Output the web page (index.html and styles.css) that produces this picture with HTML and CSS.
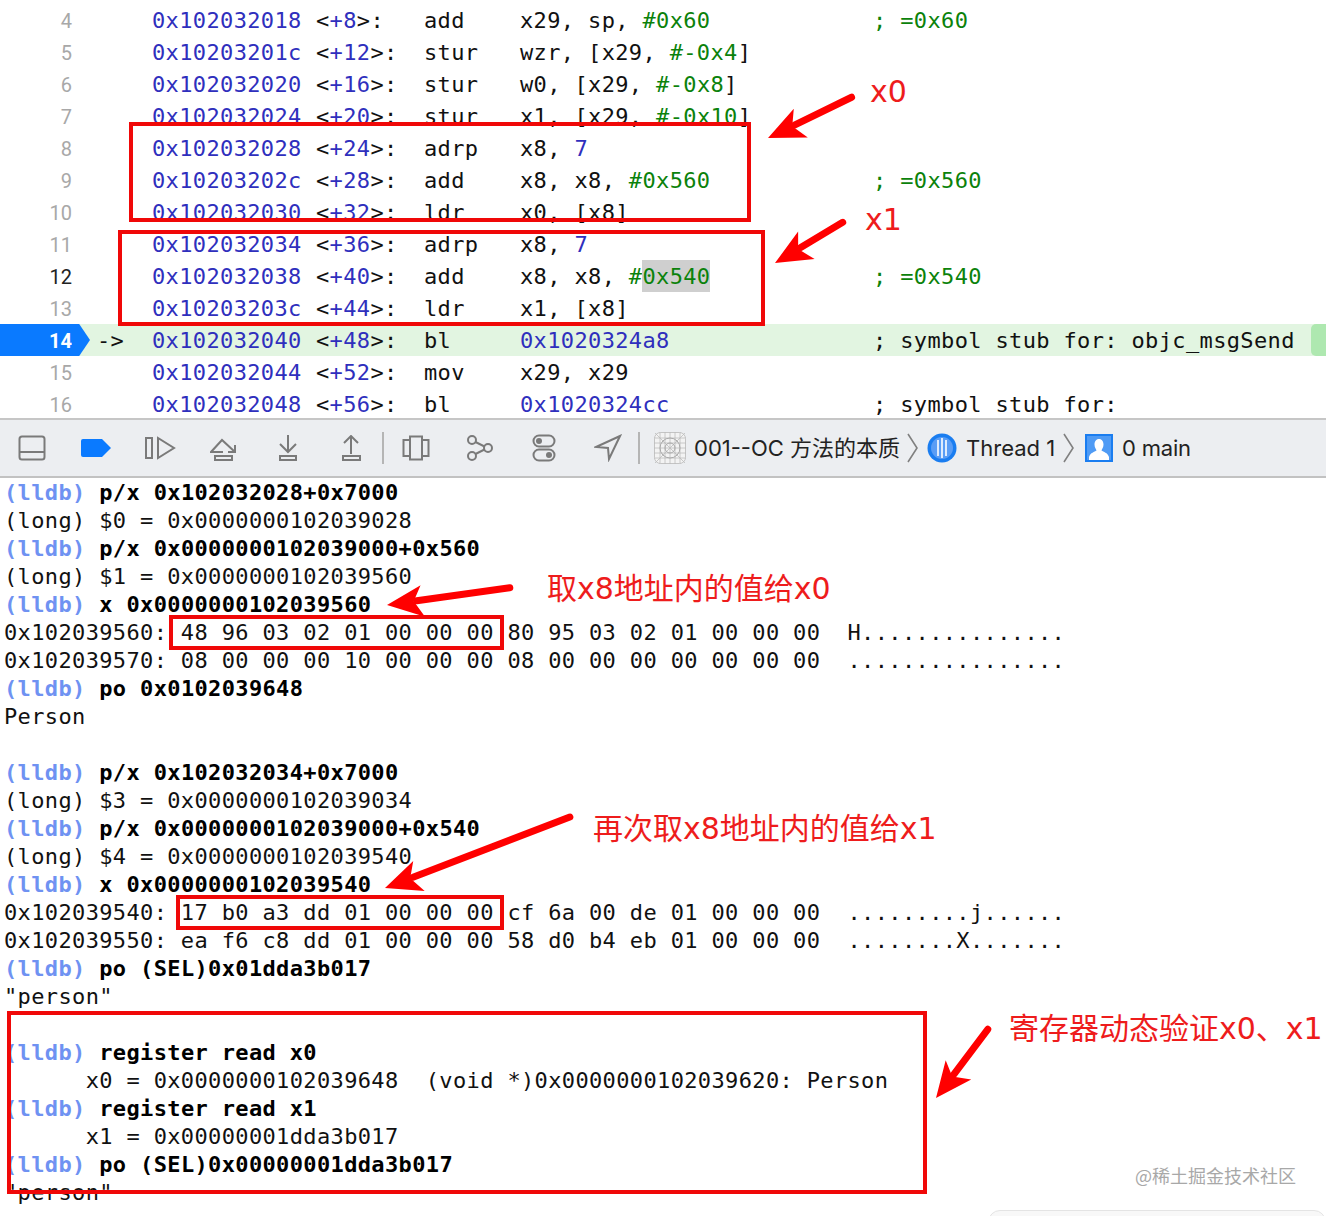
FILE: index.html
```html
<!DOCTYPE html>
<html lang="zh">
<head>
<meta charset="utf-8">
<title>LLDB objc_msgSend</title>
<link rel="stylesheet" href="styles.css">
</head>
<body>
<div class="page">
  <section class="disasm">
    <div class="row"><span class="ln">4</span><span class="mk"></span><span class="addr">0x102032018</span><span class="off">&lt;<b>+8</b>&gt;:</span><span class="op">add</span><span class="args">x29, sp, <i>#0x60</i></span><span class="cmt">; =0x60</span></div>
    <div class="row"><span class="ln">5</span><span class="mk"></span><span class="addr">0x10203201c</span><span class="off">&lt;<b>+12</b>&gt;:</span><span class="op">stur</span><span class="args">wzr, [x29, <i>#-0x4</i>]</span></div>
    <div class="row"><span class="ln">6</span><span class="mk"></span><span class="addr">0x102032020</span><span class="off">&lt;<b>+16</b>&gt;:</span><span class="op">stur</span><span class="args">w0, [x29, <i>#-0x8</i>]</span></div>
    <div class="row"><span class="ln">7</span><span class="mk"></span><span class="addr">0x102032024</span><span class="off">&lt;<b>+20</b>&gt;:</span><span class="op">stur</span><span class="args">x1, [x29, <i>#-0x10</i>]</span></div>
    <div class="row"><span class="ln">8</span><span class="mk"></span><span class="addr">0x102032028</span><span class="off">&lt;<b>+24</b>&gt;:</span><span class="op">adrp</span><span class="args">x8, <b>7</b></span></div>
    <div class="row"><span class="ln">9</span><span class="mk"></span><span class="addr">0x10203202c</span><span class="off">&lt;<b>+28</b>&gt;:</span><span class="op">add</span><span class="args">x8, x8, <i>#0x560</i></span><span class="cmt">; =0x560</span></div>
    <div class="row"><span class="ln">10</span><span class="mk"></span><span class="addr">0x102032030</span><span class="off">&lt;<b>+32</b>&gt;:</span><span class="op">ldr</span><span class="args">x0, [x8]</span></div>
    <div class="row"><span class="ln">11</span><span class="mk"></span><span class="addr">0x102032034</span><span class="off">&lt;<b>+36</b>&gt;:</span><span class="op">adrp</span><span class="args">x8, <b>7</b></span></div>
    <div class="row"><span class="ln ln-cur">12</span><span class="mk"></span><span class="addr">0x102032038</span><span class="off">&lt;<b>+40</b>&gt;:</span><span class="op">add</span><span class="args">x8, x8, <i>#<span class="sel">0x540</span></i></span><span class="cmt">; =0x540</span></div>
    <div class="row"><span class="ln">13</span><span class="mk"></span><span class="addr">0x10203203c</span><span class="off">&lt;<b>+44</b>&gt;:</span><span class="op">ldr</span><span class="args">x1, [x8]</span></div>
    <div class="row row-pc"><span class="ln ln-pc">14</span><span class="mk">-&gt;</span><span class="addr">0x102032040</span><span class="off">&lt;<b>+48</b>&gt;:</span><span class="op">bl</span><span class="args"><b>0x1020324a8</b></span><span class="cmt cmt-k">; symbol stub for: objc_msgSend</span><span class="pc-end"></span></div>
    <div class="row"><span class="ln">15</span><span class="mk"></span><span class="addr">0x102032044</span><span class="off">&lt;<b>+52</b>&gt;:</span><span class="op">mov</span><span class="args">x29, x29</span></div>
    <div class="row"><span class="ln">16</span><span class="mk"></span><span class="addr">0x102032048</span><span class="off">&lt;<b>+56</b>&gt;:</span><span class="op">bl</span><span class="args"><b>0x1020324cc</b></span><span class="cmt cmt-k">; symbol stub for:</span></div>
  </section>

  <nav class="toolbar">
    <span class="slot"><svg width="28" height="26" viewBox="0 0 28 26"><rect x="1.500" y="1.500" width="25" height="23" rx="2.500" class="ic"/><path d="M1.500 17h25" class="ic"/></svg></span>
    <span class="slot"><svg width="32" height="20" viewBox="0 0 32 20"><path d="M3 1h19l9 9-9 9H3a2 2 0 0 1-2-2V3a2 2 0 0 1 2-2z" fill="#0a7aff"/></svg></span>
    <span class="slot"><svg width="32" height="24" viewBox="0 0 32 24"><rect x="2" y="2" width="6" height="20" class="ic"/><path d="M14 2v20l16-10z" class="ic"/></svg></span>
    <span class="slot"><svg width="28" height="26" viewBox="0 0 28 26"><path d="M13 17H1L12 5l13 12" class="ic"/><path d="M25 10v7h-7" class="ic"/><rect x="5" y="21" width="17" height="4" class="ic"/></svg></span>
    <span class="slot"><svg width="22" height="26" viewBox="0 0 22 26"><path d="M11 0v17M3 9l8 8 8-8" class="ic"/><rect x="3" y="21" width="16" height="4" class="ic"/></svg></span>
    <span class="slot"><svg width="22" height="26" viewBox="0 0 22 26"><path d="M10 19V1.500M3 8l7-7 7 7" class="ic"/><rect x="2" y="21" width="17" height="4" class="ic"/></svg></span>
    <span class="sep"></span>
    <span class="slot"><svg width="28" height="26" viewBox="0 0 28 26"><rect x="8" y="1.500" width="12" height="23" class="ic"/><path d="M8 5H1.500v16H8M20 5h6.500v16H20" class="ic"/></svg></span>
    <span class="slot"><svg width="28" height="26" viewBox="0 0 28 26"><circle cx="6" cy="5" r="4" class="ic"/><circle cx="6" cy="21" r="4" class="ic"/><circle cx="22" cy="13" r="4" class="ic"/><path d="M9.500 7l9 4.500M9.500 19l9-4.500" class="ic"/></svg></span>
    <span class="slot"><svg width="24" height="28" viewBox="0 0 24 28"><rect x="1.500" y="1.500" width="21" height="11" rx="5.500" class="ic"/><rect x="1.500" y="15.500" width="21" height="11" rx="5.500" class="ic"/><circle cx="7" cy="7" r="3" fill="#7a7a7a"/><circle cx="17" cy="21" r="3" fill="#7a7a7a"/></svg></span>
    <span class="slot"><svg width="28" height="28" viewBox="0 0 28 28"><path d="M26 2 2 13l12 1 1 11z" class="ic"/></svg></span>
    <span class="sep"></span>
    <span class="crumbs">
      <svg class="app" width="32" height="32" viewBox="0 0 32 32"><rect x=".5" y=".5" width="31" height="31" rx="6" fill="#f3f3f3" stroke="#c4c4c4"/><path d="M6 0v32M11 0v32M16 0v32M21 0v32M26 0v32M0 6h32M0 11h32M0 16h32M0 21h32M0 26h32M1 1l30 30M31 1 1 31" stroke="#bcbcbc" stroke-width=".8" fill="none"/><circle cx="16" cy="16" r="10" stroke="#aaa" fill="none"/><circle cx="16" cy="16" r="5" stroke="#aaa" fill="none"/></svg>
      <span class="crumb c1">001--OC 方法的本质</span>
      <svg class="chev" width="12" height="30" viewBox="0 0 12 30"><path d="M1 1l9 14-9 14" class="chv"/></svg>
      <svg class="thr" width="30" height="30" viewBox="0 0 30 30"><circle cx="15" cy="15" r="14.500" fill="#1a7df0"/><circle cx="15" cy="15" r="11" fill="#5a9df5"/><path d="M11 7v16M15 5v20M19 7v16" stroke="#fff" stroke-width="1.600"/></svg>
      <span class="crumb c2">Thread 1</span>
      <svg class="chev" width="12" height="30" viewBox="0 0 12 30"><path d="M1 1l9 14-9 14" class="chv"/></svg>
      <svg class="usr" width="28" height="28" viewBox="0 0 28 28"><rect x="0" y="0" width="28" height="28" fill="#1a7df0"/><rect x="2" y="2" width="24" height="24" fill="#4f9bf5"/><path d="M14 5c3 0 4.500 2.500 4.500 5.500S17 15 16.500 16.500c2 1.500 6 2 7.500 6.500v3H4v-3c1.500-4.500 5.500-5 7.500-6.500C11 15 9.500 13.500 9.500 10.500S11 5 14 5z" fill="#fff"/></svg>
      <span class="crumb c3">0 main</span>
    </span>
  </nav>

  <section class="console">
    <div class="ln-c"><span class="pr">(lldb)</span> <strong>p/x 0x102032028+0x7000</strong></div>
    <div class="ln-c">(long) $0 = 0x0000000102039028</div>
    <div class="ln-c"><span class="pr">(lldb)</span> <strong>p/x 0x0000000102039000+0x560</strong></div>
    <div class="ln-c">(long) $1 = 0x0000000102039560</div>
    <div class="ln-c"><span class="pr">(lldb)</span> <strong>x 0x0000000102039560</strong></div>
    <div class="ln-c">0x102039560: 48 96 03 02 01 00 00 00 80 95 03 02 01 00 00 00  H...............</div>
    <div class="ln-c">0x102039570: 08 00 00 00 10 00 00 00 08 00 00 00 00 00 00 00  ................</div>
    <div class="ln-c"><span class="pr">(lldb)</span> <strong>po 0x0102039648</strong></div>
    <div class="ln-c">Person</div>
    <div class="ln-c"></div>
    <div class="ln-c"><span class="pr">(lldb)</span> <strong>p/x 0x102032034+0x7000</strong></div>
    <div class="ln-c">(long) $3 = 0x0000000102039034</div>
    <div class="ln-c"><span class="pr">(lldb)</span> <strong>p/x 0x0000000102039000+0x540</strong></div>
    <div class="ln-c">(long) $4 = 0x0000000102039540</div>
    <div class="ln-c"><span class="pr">(lldb)</span> <strong>x 0x0000000102039540</strong></div>
    <div class="ln-c">0x102039540: 17 b0 a3 dd 01 00 00 00 cf 6a 00 de 01 00 00 00  .........j......</div>
    <div class="ln-c">0x102039550: ea f6 c8 dd 01 00 00 00 58 d0 b4 eb 01 00 00 00  ........X.......</div>
    <div class="ln-c"><span class="pr">(lldb)</span> <strong>po (SEL)0x01dda3b017</strong></div>
    <div class="ln-c">"person"</div>
    <div class="ln-c"></div>
    <div class="ln-c"><span class="pr">(lldb)</span> <strong>register read x0</strong></div>
    <div class="ln-c">      x0 = 0x0000000102039648  (void *)0x0000000102039620: Person</div>
    <div class="ln-c"><span class="pr">(lldb)</span> <strong>register read x1</strong></div>
    <div class="ln-c">      x1 = 0x00000001dda3b017</div>
    <div class="ln-c"><span class="pr">(lldb)</span> <strong>po (SEL)0x00000001dda3b017</strong></div>
    <div class="ln-c">"person"</div>
  </section>

  <div class="box b1"></div>
  <div class="box b2"></div>
  <div class="box b3"></div>
  <div class="box b4"></div>
  <div class="box b5"></div>

  <svg class="arrows" width="1326" height="1216" viewBox="0 0 1326 1216">
    <defs>
      <path id="head" d="M0 0-36-17-27 0-36 15z" fill="#f00"/>
    </defs>
    <g transform="translate(768 138) rotate(154)"><path d="M-30 0H-93" class="shaft"/><use href="#head"/></g>
    <g transform="translate(775 263) rotate(149)"><path d="M-30 0H-79" class="shaft"/><use href="#head"/></g>
    <g transform="translate(387 605) rotate(172)"><path d="M-30 0H-124" class="shaft"/><use href="#head"/></g>
    <g transform="translate(385 888) rotate(159)"><path d="M-30 0H-198" class="shaft"/><use href="#head"/></g>
    <g transform="translate(936 1098) rotate(127)"><path d="M-30 0H-86" class="shaft"/><use href="#head"/></g>
  </svg>

  <div class="note n-x0">x0</div>
  <div class="note n-x1">x1</div>
  <div class="note n-a">取x8地址内的值给x0</div>
  <div class="note n-b">再次取x8地址内的值给x1</div>
  <div class="note n-c">寄存器动态验证x0、x1</div>
  <div class="mark">@稀土掘金技术社区</div>
  <div class="stub"></div>
</div>
</body>
</html>
```
FILE: styles.css
```css
html, body { margin: 0; padding: 0; background: #fff; }
.page { position: relative; width: 1326px; height: 1216px; overflow: hidden; background: #fff; }

/* disassembly */
.disasm { height: 418px; padding-top: 4px; box-sizing: border-box; overflow: hidden; font: 22px/34px "DejaVu Sans Mono", monospace; letter-spacing: .36px; color: #111; }
.row { display: flex; height: 32px; white-space: pre; }
.ln { width: 72px; height: 32px; text-align: right; font: 20px/34px Roboto, sans-serif; letter-spacing: 0; color: #a8a8a8; }
.ln-cur { color: #222; }
.mk { width: 80px; box-sizing: border-box; padding-left: 25px; }
.addr { width: 164px; color: #2f2fbd; }
.off { width: 108px; }
.off b { font-weight: 400; color: #2f2fbd; }
.op { width: 96px; }
.args { width: 353px; }
.args b { font-weight: 400; color: #2f2fbd; }
.args i { font-style: normal; color: #0b820b; }
.cmt { color: #0b820b; }
.cmt-k { color: #111; }
.sel { display: inline-block; height: 32px; background: #cfcfcf; }
.row-pc { background: #e2f5e1; position: relative; }
.ln-pc { width: 72px; background: #0a7aff; color: #fff; font-weight: 700; position: relative; }
.ln-pc::after { content: ""; position: absolute; left: 72px; top: 0; width: 18px; height: 32px; background: #0a7aff; clip-path: polygon(0 0, 40% 0, 100% 50%, 40% 100%, 0 100%); }
.pc-end { position: absolute; right: 0; top: 0; width: 15px; height: 32px; background: #aee8b0; border-radius: 5px 0 0 5px; }

/* toolbar */
.toolbar { display: flex; align-items: center; height: 60px; box-sizing: border-box; background: #eceef1; border-top: 2px solid #c6c6c6; border-bottom: 2px solid #c2c2c2; }
.slot { width: 64px; flex: none; display: flex; align-items: center; justify-content: center; }
.sep { width: 2px; height: 32px; margin-left: -2px; background: #b5b5b5; flex: none; }
.ic { fill: none; stroke: #7a7a7a; stroke-width: 2; }
.chv { fill: none; stroke: #808080; stroke-width: 1.6; }
.crumbs { display: flex; align-items: center; margin-left: 14px; font: 22px/30px Inter, "Noto Sans CJK SC", sans-serif; color: #222; white-space: nowrap; }
.app { flex: none; }
.crumb { display: block; }
.c1 { width: 205px; margin-left: 8px; letter-spacing: 0; }
.chev { flex: none; margin-left: 8px; }
.thr { flex: none; margin-left: 8px; }
.c2 { width: 89px; margin-left: 9px; letter-spacing: 0; }
.usr { flex: none; margin-left: 10px; }
.c3 { margin-left: 9px; letter-spacing: -.2px; }

/* console */
.console { padding-left: 4px; font: 22px/30px "DejaVu Sans Mono", monospace; letter-spacing: .36px; color: #111; }
.ln-c { height: 28px; white-space: pre; }
.ln-c strong { font-weight: 700; color: #000; }
.pr { font-weight: 700; color: #6f92f2; }

/* annotation overlay */
.box { position: absolute; box-sizing: border-box; border: 4px solid #f00808; }
.b1 { left: 129px; top: 122px; width: 622px; height: 100px; }
.b2 { left: 118px; top: 230px; width: 647px; height: 96px; }
.b3 { left: 169px; top: 615px; width: 335px; height: 35px; }
.b4 { left: 176px; top: 895px; width: 328px; height: 35px; }
.b5 { left: 7px; top: 1011px; width: 920px; height: 183px; }
.arrows { position: absolute; left: 0; top: 0; pointer-events: none; }
.shaft { fill: none; stroke: #f00; stroke-width: 7; stroke-linecap: round; }
.note { position: absolute; font: 400 30px/40px "DejaVu Sans", "Noto Sans CJK SC", sans-serif; color: #ee1c1c; white-space: nowrap; }
.n-x0 { left: 870px; top: 72px; }
.n-x1 { left: 865px; top: 200px; }
.n-a { left: 547px; top: 569px; }
.n-b { left: 593px; top: 809px; }
.n-c { left: 1009px; top: 1009px; }
.mark { position: absolute; left: 1135px; top: 1163px; font: 18px/24px "Noto Sans CJK SC", sans-serif; color: #a8a8a8; white-space: nowrap; }
.stub { position: absolute; left: 988px; top: 1210px; width: 338px; height: 30px; box-sizing: border-box; border: 1px solid #e4e4e4; border-radius: 12px; background: #f8f8f8; }
```
